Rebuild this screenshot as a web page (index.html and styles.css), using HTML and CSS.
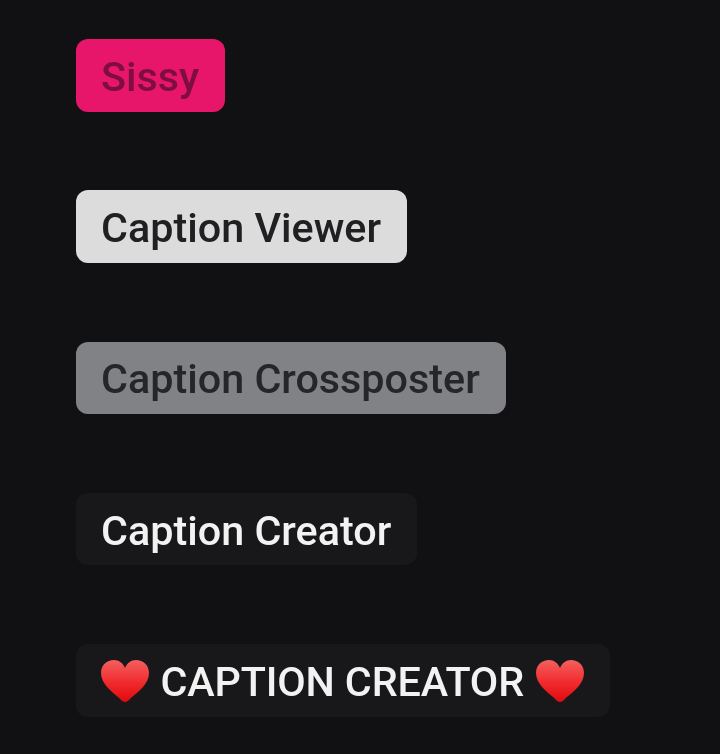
FILE: index.html
```html
<!DOCTYPE html>
<html lang="en">
<head>
<meta charset="utf-8">
<title>Badges</title>
<link rel="stylesheet" href="styles.css">
</head>
<body>
<div class="list">
  <span class="badge pink">Sissy</span>
  <span class="badge light">Caption Viewer</span>
  <span class="badge grey">Caption Crossposter</span>
  <span class="badge dark">Caption Creator</span>
  <span class="badge dark caps">
    <svg class="heart" viewBox="0 0 48 42" aria-hidden="true"><defs><linearGradient id="h" x1="0" y1="0" x2="0" y2="1"><stop offset="0" stop-color="#f4605f"/><stop offset=".55" stop-color="#f1292c"/><stop offset="1" stop-color="#df0a10"/></linearGradient></defs><path fill="url(#h)" d="M24 42c-2 0-4-2-7-5C11 32 0 24 0 13 0 5 6 0 13 0c5 0 9 3 11 8 2-5 6-8 11-8 7 0 13 5 13 13 0 11-11 19-17 24-3 3-5 5-7 5z"/></svg>
    <span class="label">CAPTION CREATOR</span>
    <svg class="heart" viewBox="0 0 48 42" aria-hidden="true"><path fill="url(#h)" d="M24 42c-2 0-4-2-7-5C11 32 0 24 0 13 0 5 6 0 13 0c5 0 9 3 11 8 2-5 6-8 11-8 7 0 13 5 13 13 0 11-11 19-17 24-3 3-5 5-7 5z"/></svg>
  </span>
</div>
</body>
</html>
```
FILE: styles.css
```css
html, body { margin: 0; height: 100%; background: #111113; }
body { overflow: hidden; }
.list {
  display: flex;
  flex-direction: column;
  align-items: flex-start;
  gap: 78.8px;
  padding: 39px 0 0 76px;
  font-family: Roboto, "Liberation Sans", sans-serif;
}
.badge {
  display: inline-flex;
  align-items: center;
  gap: 11.5px;
  box-sizing: border-box;
  height: 72.5px;
  padding: 3px 26px 0 25px;
  border-radius: 12px;
  font-size: 41.3px;
  font-weight: 500;
  white-space: nowrap;
  filter: blur(0.6px);
}
.pink { background: #e8166b; color: #7d0e42; }
.light { background: #dcdcdd; color: #202023; }
.grey { background: #818286; color: #25262a; }
.dark { background: #18181a; color: #f2f2f2; }
.label { letter-spacing: -0.15px; }
.heart { width: 48px; height: 42px; flex: none; margin-top: -1px; }
```
